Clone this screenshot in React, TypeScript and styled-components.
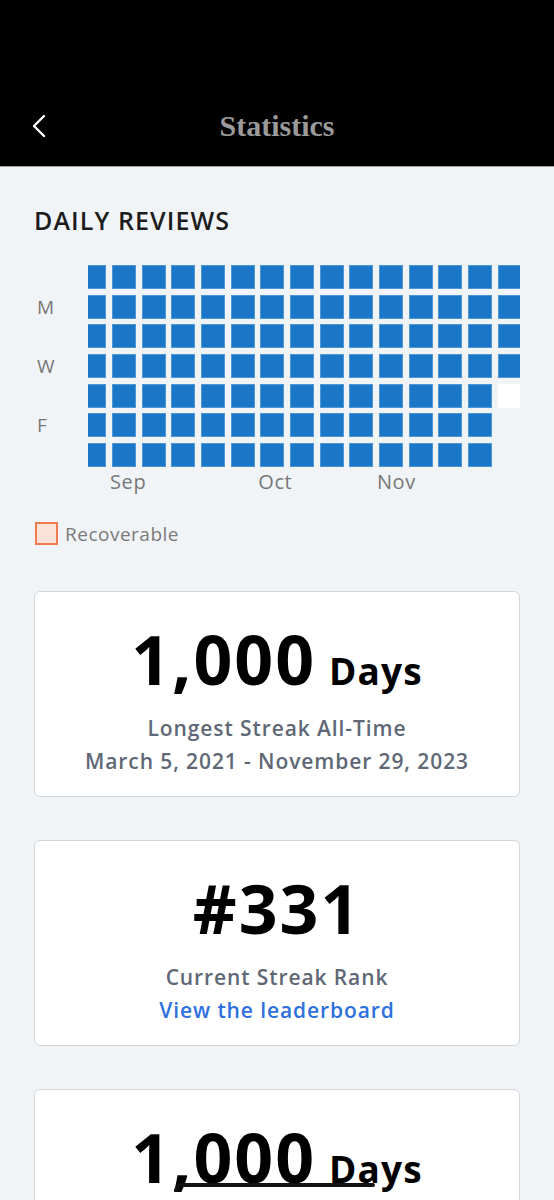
import React from "react";
import styled, { createGlobalStyle } from "styled-components";

const GlobalStyle = createGlobalStyle`
  body {
    margin: 0;
    background: #f1f4f7;
    font-family: "Open Sans", Lato, sans-serif;
  }
`;

const Page = styled.div`
  min-height: 1200px;
  background: #f1f4f7;
`;

const Header = styled.header`
  height: 167px;
  background: #000;
  padding-top: 85px;
  box-sizing: border-box;
  display: grid;
  grid-template-columns: 80px 1fr 80px;
  align-items: center;
  border-bottom: 1px solid #a0a0a0;
`;

const BackButton = styled.button`
  height: 82px;
  padding: 0 0 0 32px;
  border: 0;
  background: none;
  display: flex;
  align-items: center;
`;

const HeaderTitle = styled.h1`
  margin: 0;
  text-align: center;
  font-family: "Liberation Serif", serif;
  font-weight: 700;
  font-size: 30px;
  color: #9b9b9b;
`;

const Content = styled.main`
  padding: 38px 34px 0;
`;

const SectionTitle = styled.h2`
  margin: 0;
  font-size: 25px;
  font-weight: 600;
  line-height: 30px;
  letter-spacing: 1.1px;
  color: #1c1c1c;
`;

const Heatmap = styled.div`
  display: flex;
  margin-top: 30px;
  margin-left: 1px;
`;

const DayLabels = styled.div`
  width: 53px;
  display: grid;
  grid-template-rows: repeat(7, 24px);
  row-gap: 5.67px;
`;

const DayLabel = styled.span`
  font-size: 19px;
  color: #777;
  line-height: 24px;
  padding-left: 2px;
  letter-spacing: 0.5px;
`;

const ScrollArea = styled.div`
  width: 432px;
  overflow: hidden;
`;

const Track = styled.div`
  margin-left: -5.67px;
`;

const CellGrid = styled.div`
  display: grid;
  grid-template-rows: repeat(7, 24px);
  grid-auto-flow: column;
  grid-auto-columns: 24px;
  gap: 5.67px;
`;

const Cell = styled.div<{ $state: "done" | "empty" | "none" }>`
  width: 24px;
  height: 24px;
  box-sizing: border-box;
  background: ${(p) =>
    p.$state === "done" ? "#1a76c6" : p.$state === "empty" ? "#fff" : "transparent"};
  border: ${(p) => (p.$state === "done" ? "1px solid #4f96d6" : "none")};
`;

const MonthRow = styled.div`
  display: grid;
  grid-auto-columns: 24px;
  column-gap: 5.67px;
  height: 30px;
`;

const Month = styled.span<{ $col: number }>`
  grid-row: 1;
  grid-column: ${(p) => p.$col};
  font-size: 20px;
  letter-spacing: 0.6px;
  color: #777;
  white-space: nowrap;
  line-height: 30px;
  margin-left: -2px;
`;

const Legend = styled.div`
  display: flex;
  align-items: center;
  gap: 7px;
  margin-top: 24px;
  margin-left: 1px;
`;

const LegendSwatch = styled.span`
  width: 23px;
  height: 23px;
  box-sizing: border-box;
  border: 2.5px solid #f27a4f;
  background: #fde2d8;
`;

const LegendText = styled.span`
  font-size: 19px;
  letter-spacing: 0.5px;
  color: #7a7a7a;
`;

const Cards = styled.div`
  display: flex;
  flex-direction: column;
  gap: 43px;
  margin-top: 44px;
`;

const Card = styled.section`
  position: relative;
  box-sizing: border-box;
  min-height: 206px;
  background: #fff;
  border: 1px solid #d3d7dc;
  border-radius: 6px;
  padding: 32px 12px 17px;
  text-align: center;
`;

const Value = styled.div`
  font-size: 68px;
  font-weight: 700;
  line-height: 70px;
  letter-spacing: 2px;
  color: #000;
  margin-bottom: 18px;
`;

const Unit = styled.span`
  font-size: 37px;
  line-height: 1;
  letter-spacing: 1.2px;
  margin-left: 2px;
`;

const Caption = styled.div`
  font-size: 21px;
  font-weight: 600;
  line-height: 33px;
  letter-spacing: 0.9px;
  color: #5f6876;
`;

const Link = styled.a`
  display: block;
  font-size: 21px;
  font-weight: 600;
  line-height: 33px;
  letter-spacing: 0.9px;
  color: #2f71dc;
  text-decoration: none;
`;

const Scribble = styled.svg`
  position: absolute;
  left: 138px;
  top: 91px;
`;

type CellState = "done" | "empty" | "none";

const buildCells = (): CellState[] => {
  const cells: CellState[] = [];
  for (let i = 0; i < 14 * 7; i++) cells.push("done");
  cells.push("done", "done", "done", "done", "empty", "none", "none");
  return cells;
};

const cells = buildCells();

const StatCard = ({
  value,
  unit,
  children,
  scribble,
}: {
  value: string;
  unit?: string;
  children?: React.ReactNode;
  scribble?: boolean;
}) => (
  <Card>
    <Value>
      {value}
      {unit ? <Unit> {unit}</Unit> : null}
    </Value>
    {children}
    {scribble ? (
      <Scribble width="206" height="12" viewBox="0 0 206 12">
        <path d="M3 9 L6 4 L200 4" stroke="#111" strokeWidth="4" fill="none" strokeLinecap="round" />
      </Scribble>
    ) : null}
  </Card>
);

export default function App() {
  return (
    <Page>
      <GlobalStyle />
      <Header>
        <BackButton aria-label="Back">
          <svg width="14" height="24" viewBox="0 0 14 24">
            <path d="M12 2 L2 12 L12 22" stroke="#fff" strokeWidth="2.4" fill="none" strokeLinecap="round" strokeLinejoin="round" />
          </svg>
        </BackButton>
        <HeaderTitle>Statistics</HeaderTitle>
        <span />
      </Header>
      <Content>
        <SectionTitle>DAILY REVIEWS</SectionTitle>
        <Heatmap>
          <DayLabels>
            <span />
            <DayLabel>M</DayLabel>
            <span />
            <DayLabel>W</DayLabel>
            <span />
            <DayLabel>F</DayLabel>
          </DayLabels>
          <ScrollArea>
            <Track>
              <CellGrid>
                {cells.map((s, i) => (
                  <Cell key={i} $state={s} />
                ))}
              </CellGrid>
              <MonthRow>
                <Month $col={2}>Sep</Month>
                <Month $col={7}>Oct</Month>
                <Month $col={11}>Nov</Month>
              </MonthRow>
            </Track>
          </ScrollArea>
        </Heatmap>
        <Legend>
          <LegendSwatch />
          <LegendText>Recoverable</LegendText>
        </Legend>
        <Cards>
          <StatCard value="1,000" unit="Days">
            <Caption>Longest Streak All-Time</Caption>
            <Caption>March 5, 2021 - November 29, 2023</Caption>
          </StatCard>
          <StatCard value="#331">
            <Caption>Current Streak Rank</Caption>
            <Link href="#">View the leaderboard</Link>
          </StatCard>
          <StatCard value="1,000" unit="Days" scribble>
            <Caption>Longest Streak All-Time</Caption>
          </StatCard>
        </Cards>
      </Content>
    </Page>
  );
}
